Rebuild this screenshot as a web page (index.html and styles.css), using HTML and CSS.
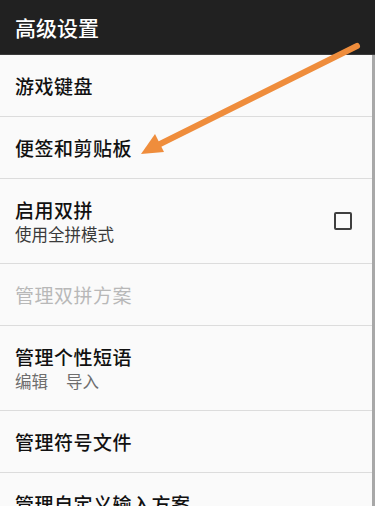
FILE: index.html
```html
<!DOCTYPE html>
<html lang="zh-CN">
<head>
<meta charset="utf-8">
<link rel="stylesheet" href="styles.css">
</head>
<body>
<div class="screen">
  <header class="bar">高级设置</header>
  <div class="list">
    <div class="row"><div class="title">游戏键盘</div></div>
    <div class="row"><div class="title">便签和剪贴板</div></div>
    <div class="row two">
      <div class="texts">
        <div class="title">启用双拼</div>
        <div class="sub">使用全拼模式</div>
      </div>
      <div class="check"></div>
    </div>
    <div class="row"><div class="title disabled">管理双拼方案</div></div>
    <div class="row two">
      <div class="texts">
        <div class="title">管理个性短语</div>
        <div class="sub light"><span class="act">编辑</span><span class="act">导入</span></div>
      </div>
    </div>
    <div class="row"><div class="title">管理符号文件</div></div>
    <div class="row last"><div class="title">管理自定义输入方案</div></div>
  </div>
  <svg class="arrow" width="375" height="506" viewBox="0 0 375 506">
    <line x1="357" y1="46" x2="154" y2="147" stroke="#ef8d3c" stroke-width="6" stroke-linecap="round"/>
    <polygon points="141,154 164,152 155,134" fill="#ef8d3c"/>
  </svg>
</div>
</body>
</html>
```
FILE: styles.css
```css
html, body {
  margin: 0;
  padding: 0;
  background: #fafafa;
}
.screen {
  position: relative;
  width: 375px;
  height: 506px;
  overflow: hidden;
  font-family: "Noto Sans CJK SC", "Noto Sans", sans-serif;
}
.bar {
  height: 55px;
  background: #212121;
  color: #ffffff;
  font-size: 21px;
  font-weight: 500;
  line-height: 55px;
  padding-left: 15px;
  border-bottom: 1px solid #3a3a3a;
  box-sizing: border-box;
}
.list {
  border-right: 3px solid #a8a8a8;
  height: 451px;
  box-sizing: border-box;
}
.row {
  height: 62px;
  box-sizing: border-box;
  border-bottom: 1px solid #dcdcdc;
  padding: 0 20px 0 15px;
  display: flex;
  align-items: center;
  justify-content: space-between;
}
.row.two {
  height: 85px;
}
.row.last {
  border-bottom: none;
}
.title {
  font-size: 19px;
  font-weight: 500;
  line-height: 24px;
  color: #111111;
  letter-spacing: 0.5px;
}
.title.disabled {
  color: #b8b8b8;
  font-weight: 400;
}
.sub {
  font-size: 16.5px;
  line-height: 22px;
  color: #3a3a3a;
  margin-top: 1px;
}
.sub.light {
  color: #6e6e6e;
}
.act {
  margin-right: 18px;
}
.check {
  width: 18px;
  height: 18px;
  box-sizing: border-box;
  border: 2px solid #3f3f3f;
  border-radius: 2px;
}
.arrow {
  position: absolute;
  left: 0;
  top: 0;
  pointer-events: none;
}
```
